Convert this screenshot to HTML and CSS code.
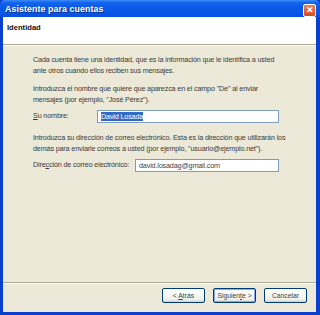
FILE: index.html
```html
<!DOCTYPE html>
<html lang="es">
<head>
    <meta charset="UTF-8">
    <title>Asistente para cuentas</title>
    <link rel="stylesheet" href="styles.css">
</head>
<body>
    <div class="window">
        <div class="titlebar">
            <span class="title">Asistente para cuentas</span>
            <span class="close">&#x2715;</span>
        </div>
        <div class="header">Identidad</div>
        <div class="body">
            <div class="content">
                <p>Cada cuenta tiene una identidad, que es la información que le identifica a usted<br>ante otros cuando ellos reciben sus mensajes.</p>
                <p class="gap">Introduzca el nombre que quiere que aparezca en el campo "De" al enviar<br>mensajes (por ejemplo, "José Pérez").</p>
                <div class="field">
                    <label class="name-label"><u>S</u>u nombre:</label>
                    <div class="input"><span class="selected">David Losada</span></div>
                </div>
                <p class="gap2">Introduzca su dirección de correo electrónico. Esta es la dirección que utilizarán los<br>demás para enviarle correos a usted (por ejemplo, "usuario@ejemplo.net").</p>
                <div class="field">
                    <label class="mail-label">Dire<u>c</u>ción de correo electrónico:</label>
                    <div class="input">david.losadag@gmail.com</div>
                </div>
            </div>
            <div class="footer">
                <button class="btn">&lt; <u>A</u>trás</button>
                <button class="btn default">Siguien<u>t</u>e &gt;</button>
                <button class="btn">Cancelar</button>
            </div>
        </div>
    </div>
</body>
</html>
```

FILE: styles.css
```css
body {
    margin: 0;
    font-family: 'Liberation Sans', Arial, sans-serif;
    background: #ffffff;
}
.window {
    width: 320px;
    height: 315px;
    box-sizing: border-box;
    display: flex;
    flex-direction: column;
    background: #0a3fd0;
    padding: 0 4px 3px 3px;
}
.titlebar {
    height: 17px;
    margin: 0 -4px 0 -3px;
    padding: 0 4px 0 5px;
    display: flex;
    align-items: center;
    justify-content: space-between;
    background: linear-gradient(to bottom, #3d8cf5 0%, #1466ec 15%, #0a58e6 45%, #0656e8 80%, #0a4fd6 100%);
    border-radius: 5px 5px 0 0;
}
.title {
    color: #ffffff;
    font-weight: bold;
    font-size: 8.8px;
    letter-spacing: 0.1px;
    text-shadow: 1px 1px 0 #0b2e8f;
}
.close {
    width: 11px;
    height: 11px;
    border: 1px solid #ffffff;
    border-radius: 2px;
    background: linear-gradient(to bottom, #e9805c, #d7491f);
    color: #ffffff;
    font-size: 9px;
    font-weight: bold;
    line-height: 11px;
    text-align: center;
    margin-top: 4px;
}
.header {
    height: 28px;
    background: #ffffff;
    border-bottom: 1px solid #aca899;
    font-weight: bold;
    font-size: 7.6px;
    color: #111;
    padding: 6px 0 0 4px;
    box-sizing: border-box;
}
.body {
    flex: 1;
    display: flex;
    flex-direction: column;
    background: #ece9d8;
    border-top: 1px solid #ffffff;
}
.content {
    flex: 1;
    width: 246px;
    margin-left: 30px;
    padding-top: 9px;
    font-size: 7.2px;
    letter-spacing: -0.15px;
    line-height: 10.5px;
    color: #3a3a3a;
}
.content p {
    margin: 0;
    white-space: nowrap;
}
.content p.gap {
    margin-top: 8px;
}
.content p.gap2 {
    margin-top: 10px;
}
.field {
    display: flex;
    align-items: center;
    margin-top: 5px;
    height: 13px;
}
.field label {
    flex-shrink: 0;
    white-space: nowrap;
}
.name-label {
    width: 64px;
}
.mail-label {
    width: 102px;
}
.input {
    flex: 1;
    height: 13px;
    box-sizing: border-box;
    border: 1px solid #7f9db9;
    background: #ffffff;
    padding-left: 3px;
    line-height: 11px;
    color: #444;
}
.selected {
    background: #316ac5;
    color: #ffffff;
}
.footer {
    height: 30px;
    border-top: 1px solid #aca899;
    box-shadow: inset 0 1px 0 #ffffff;
    display: flex;
    justify-content: flex-end;
    gap: 8px;
    padding: 5px 9px 0 0;
    box-sizing: border-box;
}
.btn {
    width: 43px;
    height: 15px;
    padding: 0;
    font-family: 'Liberation Sans', Arial, sans-serif;
    font-size: 6.8px;
    color: #444;
    border: 1px solid #003c74;
    border-radius: 2px;
    background: linear-gradient(to bottom, #ffffff, #f0f0ea 80%, #d6d0c5);
}
.btn.default {
    box-shadow: inset 0 0 0 1px #91a7f0;
}
```
